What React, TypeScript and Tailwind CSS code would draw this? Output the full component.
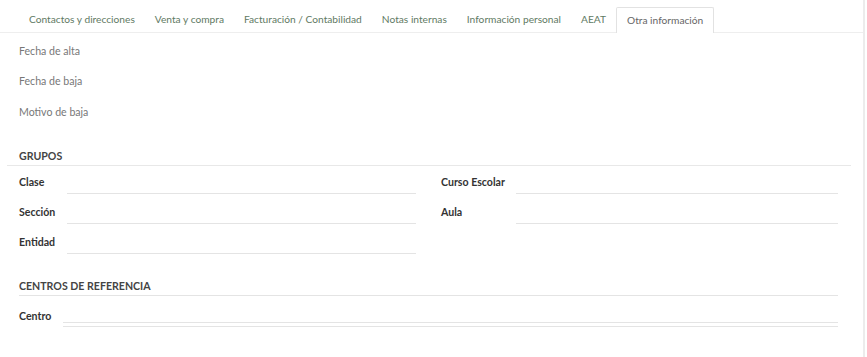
import React from "react";

const tabs = [
  "Contactos y direcciones",
  "Venta y compra",
  "Facturación / Contabilidad",
  "Notas internas",
  "Información personal",
  "AEAT",
  "Otra información",
];

function Field({ label, labelW }: { label: string; labelW: string }) {
  return (
    <div className="flex items-start h-[30px]">
      <div className={`${labelW} pl-[19px] pt-[4px] font-bold text-[#333] shrink-0`}>{label}</div>
      <div className="flex-1 h-[22px] border-b border-[#e4e4e4]"></div>
    </div>
  );
}

export default function App() {
  return (
    <div
      className="w-[867px] h-[357px] bg-white relative overflow-hidden text-[10.6px] leading-[13px]"
      style={{ fontFamily: 'Lato, "Open Sans", "Liberation Sans", sans-serif' }}
    >
      <div className="absolute right-[2px] top-0 bottom-0 w-[2px] bg-[#ececec]"></div>
      <div className="w-[863px]">
        {/* tabs */}
        <div className="flex pl-[19px] pt-[7px] border-b border-[#eeeeee] h-[33px] text-[10.2px]">
          {tabs.map((t, i) =>
            i === tabs.length - 1 ? (
              <div
                key={t}
                className="px-[10px] h-[26px] flex items-center border border-b-0 border-[#e2e2e2] bg-white text-[#666] mb-[-1px] rounded-t-[2px]"
              >
                {t}
              </div>
            ) : (
              <div key={t} className="px-[10px] h-[25px] flex items-center text-[#5f7a64]">
                {t}
              </div>
            )
          )}
        </div>

        {/* simple fields */}
        <div className="pl-[19px] pt-[3px] text-[#777] flex flex-col">
          <div className="h-[30px] flex items-center">Fecha de alta</div>
          <div className="h-[31px] flex items-center">Fecha de baja</div>
          <div className="h-[30px] flex items-center">Motivo de baja</div>
        </div>

        {/* GRUPOS */}
        <div className="mt-[23px] ml-[7px] mr-[12px] border-b border-[#e8e8e8] pl-[12px] pb-[2px]">
          <span className="font-bold text-[#444]">GRUPOS</span>
        </div>
        <div className="flex mt-[6px] pr-[25px]">
          <div className="w-[416px] flex flex-col">
            <Field label="Clase" labelW="w-[67px]" />
            <Field label="Sección" labelW="w-[67px]" />
            <Field label="Entidad" labelW="w-[67px]" />
          </div>
          <div className="flex-1 flex flex-col pl-[6px]">
            <Field label="Curso Escolar" labelW="w-[94px]" />
            <Field label="Aula" labelW="w-[94px]" />
          </div>
        </div>

        {/* CENTROS */}
        <div className="mt-[18px] ml-[19px] mr-[25px] border-b border-[#e4e4e4] pb-[2px]">
          <span className="font-bold text-[#444]">CENTROS DE REFERENCIA</span>
        </div>
        <div className="flex items-start mt-[14px] pr-[25px]">
          <div className="w-[63px] pl-[19px] font-bold text-[#333] shrink-0">Centro</div>
          <div className="flex-1 mt-[12px] h-[5px] border-y border-[#e4e4e4]"></div>
        </div>
      </div>
    </div>
  );
}
